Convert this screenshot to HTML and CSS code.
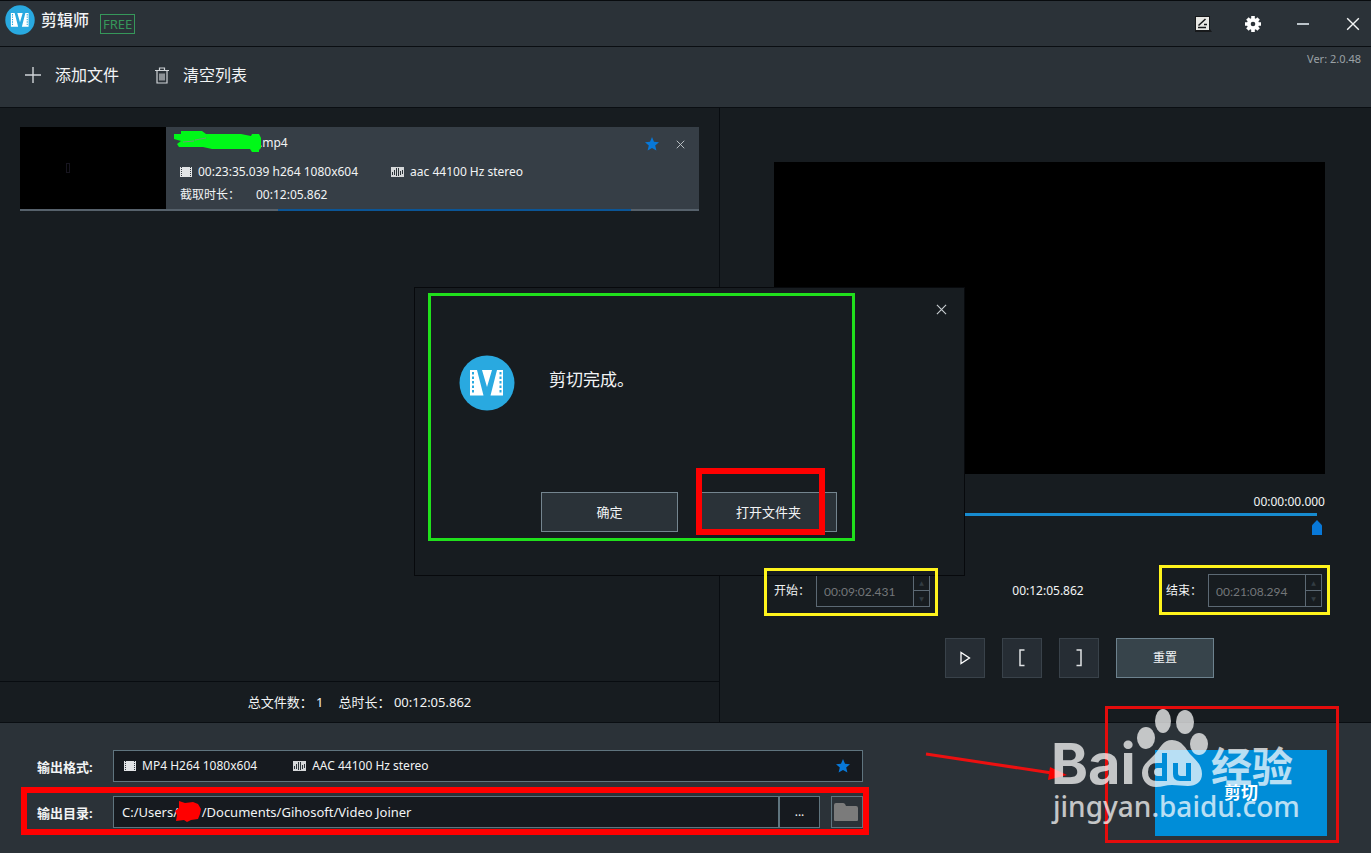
FILE: index.html
```html
<!DOCTYPE html>
<html lang="zh-CN">
<head>
<meta charset="utf-8">
<title>剪辑师</title>
<link rel="stylesheet" href="styles.css">
</head>
<body>
<svg class="defs" aria-hidden="true">
  <symbol id="logo" viewBox="0 0 56 56">
    <circle cx="28" cy="28" r="27.500" fill="#29a9e0"/>
    <path d="M11 15h7l6.500 25.500H11zM23 15h10l-5 17zM38 15h6v25.500H31.500z" fill="#fff"/>
    <path d="M13 17h2v2.500h-2zm0 4.500h2V24h-2zm0 4.500h2v2.500h-2zm0 4.500h2V33h-2zm0 4.500h2v2.500h-2zM40.500 17h2v2.500h-2zm0 4.500h2V24h-2zm0 4.500h2v2.500h-2zm0 4.500h2V33h-2zm0 4.500h2v2.500h-2z" fill="#29a9e0"/>
  </symbol>
  <symbol id="film" viewBox="0 0 12 12">
    <path d="M0 1h12v10H0z" fill="#e2e4e6"/>
    <path d="M1.500 1v10M10.500 1v10" stroke="#333a41" stroke-dasharray="1 1"/>
  </symbol>
  <symbol id="wave" viewBox="0 0 13 12">
    <path d="M0 1h13v10H0z" fill="#d6d8da"/>
    <path d="M1.500 6v3M3.500 4v5M5.500 2v8M7.500 2v8M9.500 5v4M11.500 4v4" stroke="#2c3339"/>
  </symbol>
  <symbol id="star" viewBox="0 0 14 14">
    <path d="M7 0l2 4.700 5 .5-3.800 3.400 1.200 5L7 11l-4.400 2.600 1.200-5L0 5.200l5-.5z" fill="#0878d8"/>
  </symbol>
  <symbol id="cross" viewBox="0 0 12 12">
    <path d="M1 1l10 10M11 1L1 11" stroke="currentColor" stroke-width="1.200"/>
  </symbol>
</svg>

<header class="titlebar">
  <svg class="brand-logo"><use href="#logo"/></svg>
  <h1 class="brand">剪辑师</h1>
  <span class="badge">FREE</span>
  <div class="window-tools">
    <button aria-label="反馈"><svg width="18" height="18" viewBox="0 0 18 18"><path d="M1 1h15v13l2 3H1z" fill="#17191b"/><path d="M2 2h13v13H2z" fill="#e8e8e4"/><path d="M4 12.500h8M10 9.500h3M4.500 10.500l7-6.500" stroke="#17191b" stroke-width="1.500"/></svg></button>
    <button aria-label="设置"><svg width="18" height="18" viewBox="0 0 18 18"><path d="M9 1v16M1 9h16M3.400 3.400l11.200 11.200M14.600 3.400L3.400 14.600" stroke="#fff" stroke-width="3.600"/><circle cx="9" cy="9" r="4.300" fill="none" stroke="#fff" stroke-width="3.600"/><circle cx="9" cy="9" r="2.300" fill="#2b3238"/></svg></button>
    <button aria-label="最小化"><svg width="12" height="12" viewBox="0 0 12 12"><path d="M0 6h12" stroke="#bcc4ca" stroke-width="2"/></svg></button>
    <button aria-label="关闭"><svg width="14" height="14"><use href="#cross"/></svg></button>
  </div>
</header>

<nav class="toolbar">
  <button class="tool"><svg width="16" height="16" viewBox="0 0 16 16"><path d="M8 0v16M0 8h16" stroke="#d0d4d7" stroke-width="1.400"/></svg>添加文件</button>
  <button class="tool"><svg width="14" height="17" viewBox="0 0 14 17"><path d="M0 3.500h14M4.500 3V1h5v2M2 4v12h10V4M5 6.500v7M7 6.500v7M9 6.500v7" fill="none" stroke="#d0d4d7" stroke-width="1.200"/></svg>清空列表</button>
  <span class="version">Ver: 2.0.48</span>
</nav>

<main class="workspace">
  <section class="files">
    <div class="list">
      <article class="clip">
        <div class="thumb"><span class="thumb-mark"></span></div>
        <div class="clip-body">
          <div class="clip-name">
            <svg class="scribble" viewBox="0 0 90 24"><path d="M0 5h7V2h21l4 3h35l10 2 1-2h7l2 4v10l-2 2v2h-7l-2-3H38l-9-2H5l-2-3 4-3L0 10z" fill="#00f818"/><path d="M9 13l11-1M21 11l11-2" stroke="#6f9a78"/></svg>
            .mp4
          </div>
          <div class="clip-info">
            <span class="meta"><svg width="12" height="12"><use href="#film"/></svg>00:23:35.039 h264 1080x604</span>
            <span class="meta"><svg width="13" height="12"><use href="#wave"/></svg>aac 44100 Hz stereo</span>
          </div>
          <div class="clip-cut"><span class="cut-label">截取时长：</span><span>00:12:05.862</span></div>
          <div class="clip-tools">
            <button aria-label="收藏"><svg width="14" height="14"><use href="#star"/></svg></button>
            <button aria-label="移除"><svg width="9" height="9"><use href="#cross"/></svg></button>
          </div>
        </div>
        <div class="clip-range"></div>
      </article>
    </div>
    <div class="totals"><span>总文件数： 1</span><span>总时长： 00:12:05.862</span></div>
  </section>

  <section class="player">
    <div class="screen"></div>
    <div class="position">00:00:00.000</div>
    <input class="timeline" type="range" min="0" max="100" value="100" aria-label="播放位置">
    <div class="times">
      <div class="time-field">
        <label for="start">开始：</label>
        <div class="spinner"><input id="start" type="text" value="00:09:02.431" disabled><div class="steps"><button aria-label="增加开始时间" disabled>▲</button><button aria-label="减少开始时间" disabled>▼</button></div></div>
        <div class="mark mark-start"></div>
      </div>
      <span>00:12:05.862</span>
      <div class="time-field">
        <label for="end">结束：</label>
        <div class="spinner"><input id="end" type="text" value="00:21:08.294" disabled><div class="steps"><button aria-label="增加结束时间" disabled>▲</button><button aria-label="减少结束时间" disabled>▼</button></div></div>
        <div class="mark mark-end"></div>
      </div>
    </div>
    <div class="controls">
      <button class="key" aria-label="播放"><svg width="12" height="14" viewBox="0 0 12 14"><path d="M2 1.500v11L10.500 7z" fill="none" stroke="#fff" stroke-width="1.300"/></svg></button>
      <button class="key" aria-label="设为开始"><svg width="8" height="18" viewBox="0 0 8 18"><path d="M6.500 1H2v15.500h4.500" fill="none" stroke="#dfe2e4" stroke-width="1.500"/></svg></button>
      <button class="key" aria-label="设为结束"><svg width="8" height="18" viewBox="0 0 8 18"><path d="M1.500 1H6v15.500H1.500" fill="none" stroke="#dfe2e4" stroke-width="1.500"/></svg></button>
      <button class="reset">重置</button>
    </div>
  </section>
</main>

<footer class="output">
  <div class="settings">
    <div class="row">
      <span class="row-label" id="format-label">输出格式:</span>
      <button class="format" aria-labelledby="format-label">
        <span class="meta"><svg width="12" height="12"><use href="#film"/></svg>MP4 H264 1080x604</span>
        <span class="meta"><svg width="13" height="12"><use href="#wave"/></svg>AAC 44100 Hz stereo</span>
        <svg class="format-star" width="14" height="14"><use href="#star"/></svg>
      </button>
    </div>
    <div class="row">
      <label class="row-label" for="dir">输出目录:</label>
      <div class="path">
        <input id="dir" type="text" value="C:/Users/       /Documents/Gihosoft/Video Joiner">
        <button class="browse" aria-label="浏览">...</button>
        <svg class="path-scribble" viewBox="0 0 28 22"><path d="M4 0l6 2 8-1 5 2 3 5-1 5-2 5-7 1-4 2-3-2-8 1 1-6-2-4 4-3z" fill="#f00"/></svg>
      </div>
      <button class="folder" aria-label="打开输出目录"><svg width="24" height="20" viewBox="0 0 24 20"><path d="M0 3q0-2 2-2h7q1 0 2 1l1 2h10q2 0 2 2v12q0 1-1 1H1q-1 0-1-1z" fill="#7b7b7b"/></svg></button>
      <div class="mark mark-dir"></div>
    </div>
  </div>
  <button class="cut">剪切<span class="mark mark-cut"></span></button>
  <svg class="arrow" viewBox="0 0 142 32"><path d="M1 4l126 19" stroke="#ec1010" stroke-width="3"/><path d="M125 17l17 8-19 5z" fill="#f80000"/></svg>
  <svg class="watermark" viewBox="0 0 250 130">
    <g fill="#fff">
      <text class="wm-latin" x="1" y="78">Bai</text>
      <ellipse cx="96" cy="32" rx="9" ry="11"/>
      <ellipse cx="113" cy="15" rx="8" ry="12"/>
      <ellipse cx="135" cy="16" rx="9" ry="12"/>
      <ellipse cx="149" cy="38" rx="9" ry="11"/>
      <path fill-rule="evenodd" d="M122 34c10 0 14 9 18 14 6 6 12 11 12 20 0 8-6 12-14 12-6 0-10-1-16-1s-10 2-16 2c-8 0-14-6-14-14 0-9 8-13 13-19 5-6 8-14 17-14zM117 47v28h-10q-9 0-9-9t9-9h5V47zm-5 15h-4q-4 0-4 4t4 4h4zM123 57h5v10q0 3 3 3h5V57h5v18h-11q-7 0-7-7z"/>
      <text class="wm-han" x="161" y="76">经验</text>
      <text class="wm-site" x="3" y="111">jingyan.baidu.com</text>
    </g>
  </svg>
</footer>

<div class="dialog" role="dialog" aria-labelledby="message">
  <button class="dialog-close" aria-label="关闭"><svg width="11" height="11"><use href="#cross"/></svg></button>
  <div class="dialog-body">
    <svg class="dialog-logo"><use href="#logo"/></svg>
    <p id="message" class="message">剪切完成。</p>
  </div>
  <div class="dialog-actions">
    <button class="action">确定</button>
    <button class="action">打开文件夹<span class="mark mark-open"></span></button>
  </div>
  <div class="mark mark-dialog"></div>
</div>
</body>
</html>
```
FILE: styles.css
```css
* { box-sizing: border-box; }
body {
  margin: 0;
  min-height: 100vh;
  display: flex;
  flex-direction: column;
  position: relative;
  overflow-x: hidden;
  background: #171c20;
  border-top: 1px solid #080b0e;
  color: #f2f4f5;
  font: 12px/18px "Noto Sans", "Noto Sans CJK SC", sans-serif;
}
button, input { font: inherit; color: inherit; margin: 0; }
button {
  padding: 0;
  border: 0;
  background: none;
  display: flex;
  align-items: center;
  justify-content: center;
}
svg { display: block; flex: none; }
.defs { position: absolute; width: 0; height: 0; }
.mark { position: absolute; pointer-events: none; z-index: 3; }

.titlebar {
  display: flex;
  align-items: flex-start;
  height: 46px;
  padding: 4px 0 0 5px;
  background: #2b3238;
  border-bottom: 1px solid #0a0e12;
}
.brand-logo { width: 30px; height: 30px; }
.brand { margin: 3px 11px 0 6px; font-size: 16px; line-height: 24px; font-weight: 500; }
.badge {
  margin-top: 9px;
  padding: 0 2px;
  border: 1px solid #36975a;
  color: #36975a;
  font-size: 13px;
  line-height: 18px;
}
.window-tools { display: flex; margin-left: auto; }
.window-tools button { width: 50px; height: 37px; }
.window-tools button:last-child { width: 36px; margin-left: 7px; }

.toolbar {
  display: flex;
  align-items: center;
  gap: 36px;
  height: 61px;
  padding: 0 10px 4px 25px;
  background: #2b3238;
  border-bottom: 1px solid #0a0e12;
}
.tool { gap: 14px; font-size: 16px; line-height: 24px; }
.version { margin-left: auto; align-self: flex-start; margin-top: 3px; font-size: 11px; color: #9aa1a6; }

.workspace { flex: 1; display: grid; grid-template-columns: minmax(0, 720fr) minmax(0, 651fr); }
.files { display: flex; flex-direction: column; border-right: 1px solid #080c10; }
.list { flex: 1; padding: 19px 20px; }
.clip { display: flex; flex-wrap: wrap; background: #363e46; }
.thumb { width: 146px; height: 82px; background: #000; display: flex; align-items: center; padding-left: 46px; }
.thumb-mark { width: 4px; height: 10px; border: 1px solid #17151f; }
.clip-body { position: relative; flex: 1; padding: 7px 14px 0; }
.clip-name { position: relative; padding-left: 79px; margin-bottom: 11px; }
.scribble { position: absolute; left: -6px; top: -5px; width: 90px; height: 24px; }
.clip-info { display: flex; gap: 33px; margin-bottom: 5px; }
.meta { display: flex; align-items: center; gap: 6px; }
.clip-cut { display: flex; gap: 14px; }
.cut-label { width: 62px; white-space: nowrap; }
.clip-tools { position: absolute; top: 10px; right: 14px; display: flex; gap: 17px; color: #c4c9cd; }
.clip-range {
  width: 100%;
  height: 2px;
  background: linear-gradient(90deg, #56616b 38%, #0b5596 38% 90%, #56616b 90%);
}
.totals {
  display: flex;
  justify-content: center;
  gap: 15px;
  padding: 11px 0;
  border-top: 1px solid #080c10;
  font-size: 13px;
}

.player { padding: 54px 46px 44px 54px; }
.screen { height: 312px; background: #000; }
.position { margin: 19px 0 2px; text-align: right; }
.timeline { display: block; width: calc(100% - 3px); height: 22px; appearance: none; background: none; }
.timeline::-webkit-slider-runnable-track {
  height: 22px;
  background: linear-gradient(#178bd0, #178bd0) 5px 0 / calc(100% - 10px) 3px no-repeat;
}
.timeline::-webkit-slider-thumb {
  appearance: none;
  width: 10px;
  height: 15px;
  margin-top: 7px;
  background: #0878d8;
  clip-path: polygon(50% 0, 100% 35%, 100% 100%, 0 100%, 0 35%);
}
.times { display: flex; align-items: center; justify-content: space-between; margin-top: 39px; padding-right: 3px; }
.time-field { position: relative; display: flex; align-items: center; }
.time-field label { width: 42px; font-size: 12px; white-space: nowrap; }
.spinner { display: flex; width: 114px; height: 33px; border: 1px solid #5c6974; }
.spinner input {
  flex: 1;
  min-width: 0;
  padding: 2px 0 0 7px;
  border: 0;
  background: none;
  color: #737679;
  font-family: Lato, sans-serif;
}
.steps { width: 16px; border-left: 1px solid #5c6974; display: flex; flex-direction: column; }
.steps button { flex: 1; color: #333c43; font: 6px/8px "DejaVu Sans", sans-serif; }
.steps button + button { border-top: 1px solid #5c6974; }
.mark-start { inset: -6px -8px -9px -10px; border: 3px solid #fff41c; }
.mark-end { inset: -9px -8px -8px -7px; border: 3px solid #fff41c; }
.controls { display: flex; justify-content: center; gap: 17px; margin-top: 31px; padding-left: 60px; }
.key { width: 40px; height: 40px; background: #262d34; border: 1px solid #39424a; }
.reset { width: 98px; height: 40px; background: #37444b; border: 1px solid #6d828e; font-size: 12px; }

.output {
  position: relative;
  display: flex;
  justify-content: space-between;
  height: 132px;
  padding: 27px 44px 17px 37px;
  background: #2b3238;
  border-top: 1px solid #0a0e12;
  border-bottom: 1px solid #14191d;
}
.settings { display: flex; flex-direction: column; gap: 14px; flex: 0 1 826px; }
.row { position: relative; display: flex; align-items: center; height: 32px; }
.row-label { width: 76px; font-size: 13px; font-weight: 700; padding-top: 2px; }
.format {
  flex: 1;
  height: 32px;
  justify-content: flex-start;
  gap: 36px;
  padding: 0 12px 0 10px;
  background: #161a1f;
  border: 1px solid #5f747e;
}
.format-star { margin-left: auto; }
.path { position: relative; flex: 1; display: flex; height: 32px; }
.path input { flex: 1; min-width: 0; padding: 0 8px; background: #161a1f; border: 1px solid #5f747e; font-size: 13px; }
.browse { width: 41px; background: #161a1f; border: 1px solid #5f747e; }
.path-scribble { position: absolute; left: 62px; top: 5px; width: 28px; height: 22px; }
.folder { width: 32px; height: 32px; margin-left: 11px; padding-right: 2px; border: 1px solid #5f747e; }
.mark-dir { inset: -9px -6px -7px -16px; border: 6px solid #f00; }
.cut { position: relative; width: 172px; height: 86px; background: #008dd8; font-size: 17px; font-weight: 700; color: #fff; }
.mark-cut { inset: -44px -12px -7px -50px; border: 3px solid #e40c0c; }
.arrow { position: absolute; right: 304px; bottom: 71px; width: 142px; height: 32px; }
.watermark { position: absolute; right: 71px; bottom: 17px; width: 250px; height: 130px; opacity: .72; pointer-events: none; z-index: 4; }
.wm-latin { font: 700 56px Inter, sans-serif; }
.wm-han { font: 700 41px "Noto Sans CJK SC", sans-serif; }
.wm-site { font: 500 28px "Noto Sans", sans-serif; }

.dialog {
  position: absolute;
  left: 414px;
  top: 286px;
  width: 551px;
  padding: 67px 127px 43px 44px;
  background: #171c20;
  border: 1px solid #07090c;
  z-index: 2;
}
.dialog-close { position: absolute; right: 17px; top: 16px; color: #c9ced2; }
.dialog-body { display: flex; align-items: center; gap: 34px; margin-bottom: 81px; }
.dialog-logo { width: 56px; height: 56px; }
.message { margin: 0 0 6px; font-size: 17px; line-height: 24px; }
.dialog-actions { display: flex; justify-content: flex-end; gap: 22px; }
.action { position: relative; width: 137px; height: 40px; background: #2a3238; border: 1px solid #74858f; font-size: 13px; }
.mark-open { inset: -25px 11px -4px -5px; border: 6px solid #f00; }
.mark-dialog { left: 13px; top: 5px; right: 109px; bottom: 34px; border: 3px solid #20e01c; z-index: 2; }
```
